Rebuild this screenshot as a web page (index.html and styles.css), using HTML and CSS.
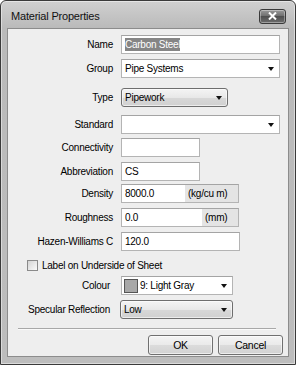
FILE: index.html
```html
<!DOCTYPE html>
<html>
<head>
<meta charset="UTF-8">
<title>Material Properties</title>
<link rel="stylesheet" href="styles.css">
</head>
<body>
<div class="window">
	<div class="titlebar">
		<span class="title">Material Properties</span>
		<div class="close">
			<svg width="9" height="8" viewBox="0 0 9 8"><path d="M1 0.5 L8 7.5 M8 0.5 L1 7.5" stroke="#fff" stroke-width="2"/></svg>
		</div>
	</div>
	<div class="client">
		<div class="row r-name">
			<span class="lbl">Name</span>
			<div class="box w-full"><span class="hilite">Carbon Steel</span></div>
		</div>
		<div class="row r-group">
			<span class="lbl">Group</span>
			<div class="box w-full combo">Pipe Systems<i class="arrow"></i></div>
		</div>
		<div class="row r-type">
			<span class="lbl">Type</span>
			<div class="dropbtn w-type">Pipework<i class="arrow"></i></div>
		</div>
		<div class="row r-standard">
			<span class="lbl">Standard</span>
			<div class="box w-full combo"><i class="arrow"></i></div>
		</div>
		<div class="row r-conn">
			<span class="lbl">Connectivity</span>
			<div class="box w-short"></div>
		</div>
		<div class="row r-abbr">
			<span class="lbl">Abbreviation</span>
			<div class="box w-short">CS</div>
		</div>
		<div class="row r-density">
			<span class="lbl">Density</span>
			<div class="unitbox">
				<div class="val w-dens">8000.0</div>
				<div class="unit">(kg/cu m)</div>
			</div>
		</div>
		<div class="row r-rough">
			<span class="lbl">Roughness</span>
			<div class="unitbox">
				<div class="val w-rough">0.0</div>
				<div class="unit">(mm)</div>
			</div>
		</div>
		<div class="row r-hazen">
			<span class="lbl">Hazen-Williams C</span>
			<div class="box w-hazen">120.0</div>
		</div>
		<div class="row r-check">
			<span class="checkbox"></span>
			<span class="checklbl">Label on Underside of Sheet</span>
		</div>
		<div class="row r-colour">
			<span class="lbl lbl-short">Colour</span>
			<div class="box w-colour combo"><span class="swatch"></span>9: Light Gray<i class="arrow"></i></div>
		</div>
		<div class="row r-spec">
			<span class="lbl lbl-short">Specular Reflection</span>
			<div class="dropbtn w-spec">Low<i class="arrow"></i></div>
		</div>
		<div class="sep"></div>
		<div class="actions">
			<div class="btn">OK</div>
			<div class="btn">Cancel</div>
		</div>
	</div>
</div>
</body>
</html>
```

FILE: styles.css
```css
body{
	margin:0;
	background:#fff;
	font-family:"Liberation Sans",Arial,sans-serif;
}
.window{
	width:296px;
	height:365px;
	box-sizing:border-box;
	border:1px solid #3a3a3a;
	border-radius:6px 6px 0 0;
	background:linear-gradient(#d0d0d0,#bababa 27px,#bdbdbd);
	box-shadow:inset 0 0 0 1px rgba(255,255,255,.45);
	padding:0 6px 7px 6px;
	display:flex;
	flex-direction:column;
}
.titlebar{
	height:27px;
	display:flex;
	align-items:center;
	justify-content:space-between;
}
.title{
	font-size:11px;
	letter-spacing:-0.2px;
	color:#111;
	margin-left:4px;
	margin-top:3px;
}
.close{
	width:27px;
	height:15px;
	box-sizing:border-box;
	border:1px solid #3a3a3a;
	border-radius:3px;
	margin-right:3px;
	margin-top:3px;
	background:linear-gradient(#9a9a9a,#6c6c6c 50%,#505050 50%,#6e6e6e);
	box-shadow:inset 0 0 0 1px rgba(255,255,255,.35);
	display:flex;
	align-items:center;
	justify-content:center;
}
.client{
	flex:1;
	background:#eeeeee;
	border:1px solid #8c8c8c;
	font-size:10px;
	letter-spacing:-0.25px;
	color:#000;
}
.row{
	display:flex;
	align-items:center;
	height:19px;
	margin-top:5px;
}
.lbl{
	width:105px;
	margin-right:8px;
	text-align:right;
}
.lbl-short{
	width:102px;
	margin-right:11px;
}
.r-name{margin-top:6px;}
.r-type{margin-top:10px;}
.r-standard{margin-top:8px;}
.r-conn{margin-top:4px;}
.r-density{margin-top:3px;}
.r-check{margin-top:7px;height:14px;}
.r-colour{margin-top:4px;}
.box{
	height:19px;
	box-sizing:border-box;
	background:#fff;
	border:1px solid #b4b4b4;
	border-top-color:#a4a4a4;
	padding:0 3px;
	display:flex;
	align-items:center;
	position:relative;
}
.w-full{width:159px;}
.w-short{width:79px;}
.w-hazen{width:119px;}
.w-colour{width:112px;}
.w-type{width:107px;}
.w-spec{width:113px;margin-left:-1px;}
.hilite{
	background:#858585;
	color:#fff;
	padding:1px 0;
}
.arrow{
	position:absolute;
	right:5px;
	top:7px;
	width:0;
	height:0;
	border-left:3px solid transparent;
	border-right:3px solid transparent;
	border-top:4px solid #111;
}
.dropbtn{
	height:19px;
	box-sizing:border-box;
	border:1px solid #6e6e6e;
	border-radius:3px;
	background:linear-gradient(#f4f4f4,#e8e8e8 50%,#d8d8d8 50%,#d0d0d0);
	box-shadow:inset 0 0 0 1px rgba(255,255,255,.6);
	padding:0 3px;
	display:flex;
	align-items:center;
	position:relative;
}
.unitbox{
	display:flex;
	height:19px;
	box-sizing:border-box;
	border:1px solid #b4b4b4;
	border-top-color:#a4a4a4;
	width:118px;
}
.val{
	background:#fff;
	padding:0 3px;
	display:flex;
	align-items:center;
}
.w-dens{width:57px;}
.w-rough{width:74px;}
.unit{
	flex:1;
	background:#e4e4e4;
	padding-left:3px;
	display:flex;
	align-items:center;
}
.checkbox{
	width:11px;
	height:11px;
	box-sizing:border-box;
	border:1px solid #8a8a8a;
	background:linear-gradient(135deg,#d4d4d4,#fafafa);
	margin-left:19px;
	margin-right:4px;
}
.swatch{
	width:14px;
	height:14px;
	box-sizing:border-box;
	border:1px solid #555;
	background:#a8a8a8;
	margin-right:2px;
	margin-left:-1px;
}
.sep{
	margin:9px 12px 0 10px;
	border-top:1px solid #a8a8a8;
	border-bottom:1px solid #fafafa;
}
.actions{
	display:flex;
	justify-content:flex-end;
	gap:5px;
	margin:5px 5px 0 0;
}
.btn{
	width:65px;
	height:20px;
	box-sizing:border-box;
	border:1px solid #707070;
	border-radius:3px;
	background:linear-gradient(#f4f4f4,#eaeaea 50%,#dcdcdc 50%,#d2d2d2);
	box-shadow:inset 0 0 0 1px rgba(255,255,255,.6);
	display:flex;
	align-items:center;
	justify-content:center;
	font-size:10.5px;
}
```
